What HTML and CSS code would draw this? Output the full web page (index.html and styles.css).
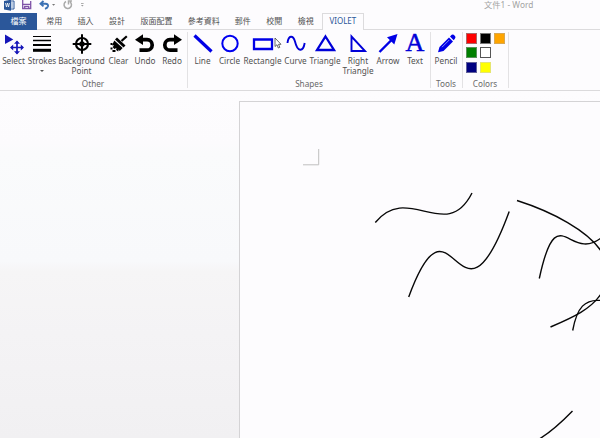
FILE: index.html
```html
<!DOCTYPE html>
<html lang="zh-Hant">
<head>
<meta charset="utf-8">
<title>文件1 - Word</title>
<link rel="stylesheet" href="styles.css">
</head>
<body>
<header class="titlebar">
  <svg class="quick" viewBox="0 0 90 13">
    <path d="M9 1h5v8H9z" fill="#fff" stroke="#2b579a"/><path d="M10 3h3M10 5h3M10 7h3" stroke="#7899c8"/>
    <path d="M4 1l7-1.300v11L4 9.500z" fill="#2b579a"/><path d="M5.500 3l1 4 1-4 1 4 1-4" fill="none" stroke="#fff" stroke-width=".8"/>
    <path d="M22.700 0v8.500h8V1" fill="none" stroke="#8054a8" stroke-width="1.300"/><path d="M22 4.300h9M24.700 8V6.300h4V8" fill="none" stroke="#8054a8" stroke-width="1.300"/>
    <path d="M43.500 1l-3 2.700 3 2.700M41 3.700h4.500q3 .3 2.500 2.500-.5 1.700-3 2.600" fill="none" stroke="#3c72b5" stroke-width="1.900"/>
    <path d="M52 4h3.200L53.600 5.800z" fill="#777"/>
    <path d="M66 1.500a3.700 3.700 0 1 0 4 .3M68.500 4.500V1H72" fill="none" stroke="#aaa" stroke-width="1.500"/>
    <path d="M81 3.500h2.600" stroke="#999" stroke-width=".8"/><path d="M81 5h2.600L82.300 6.600z" fill="#999"/>
  </svg>
  <span class="doc-title">文件1 - Word</span>
</header>
<nav class="tabs">
  <span class="tab file">檔案</span><span class="tab">常用</span><span class="tab">插入</span><span class="tab">設計</span><span class="tab wide4">版面配置</span><span class="tab wide4b">參考資料</span><span class="tab">郵件</span><span class="tab">校閱</span><span class="tab">檢視</span><span class="tab active">VIOLET</span>
</nav>
<main class="ribbon">
  <section class="group other">
    <div class="tools">
      <div class="tool w27"><svg viewBox="1 0 22 22"><path d="M3 1.500v9.500L11.300 6.500z" fill="#1515b8"/><path d="M15 8.500v12M9 14.500h12" stroke="#1515b8" stroke-width="1.700"/><path d="M15 7.500l-3 3.200h6zM15 21.500l-3-3.200h6zM8 14.500l3.200-3v6zM22 14.500l-3.200-3v6z" fill="#1515b8"/></svg><span>Select</span></div>
      <div class="tool w30"><svg viewBox="0 0 22 22"><path d="M2 3.500h18" stroke="#000"/><path d="M2 7.500h18" stroke="#000" stroke-width="1.500"/><path d="M2 12h18" stroke="#000" stroke-width="2"/><path d="M2 17.300h18" stroke="#000" stroke-width="3"/></svg><span>Strokes</span><i class="caret"></i></div>
      <div class="tool w49"><svg viewBox="0 0 22 22"><circle cx="11" cy="11" r="6" fill="none" stroke="#000" stroke-width="2.200"/><path d="M11 1.200v19.600M1.700 11h18.600" stroke="#000" stroke-width="2"/><circle cx="11" cy="11" r="2.700"/></svg><span>Background<br>Point</span></div>
      <div class="tool w25"><svg viewBox="0 0 22 22"><path d="M18.800 3.200L13.500 8" stroke="#000" stroke-width="2.200"/><path d="M9 4.500l8.500 8-2 2L7 6.500z"/><path d="M6.300 7.500l8.400 7.600-3 3-1-1.700-.5 2.200-2.100-1.500.3-2-2 1-1.800-2.200 1.500-1.300-2.100-.3z"/><path d="M2.500 10h2v2h-2zM2.500 14.500h2v2h-2zM4.500 17h3v2h-3z"/></svg><span>Clear</span></div>
      <div class="tool w28"><svg viewBox="0 0 22 22"><path d="M7 6.700h6a5.200 5.200 0 0 1 0 10.400H5.500" fill="none" stroke="#000" stroke-width="3.700"/><path d="M1 6.700l8-5.400v10.800z"/></svg><span>Undo</span></div>
      <div class="tool w26"><svg viewBox="0 0 22 22"><path d="M15 6.700H9a5.200 5.200 0 0 0 0 10.400h7.500" fill="none" stroke="#000" stroke-width="3.700"/><path d="M21 6.700l-8-5.400v10.800z"/></svg><span>Redo</span></div>
    </div>
    <h2>Other</h2>
  </section>
  <section class="group shapes">
    <div class="tools">
      <div class="tool w27"><svg viewBox="0 0 22 22"><path d="M2.500 2.500l17 16" stroke="#0000e6" stroke-width="3.200"/></svg><span>Line</span></div>
      <div class="tool w27"><svg viewBox="0 0 22 22"><circle cx="11" cy="10.500" r="7.700" fill="none" stroke="#0000f0" stroke-width="2"/></svg><span>Circle</span></div>
      <div class="tool w39"><svg viewBox="0 0 22 22"><path d="M2 6.500h18v9.500H2z" fill="none" stroke="#0000e6" stroke-width="2.300"/></svg><span>Rectangle</span></div>
      <div class="tool w27"><svg viewBox="0 0 22 22"><path d="M2.500 10C3.500 2 8 2 10 8.500c2.500 10.500 8 11 9.700 1.500" fill="none" stroke="#0000d8" stroke-width="1.900"/></svg><span>Curve</span></div>
      <div class="tool w32"><svg viewBox="0 0 22 22"><path d="M11.500 3.500L20 17H3z" fill="none" stroke="#0000d8" stroke-width="2.300"/></svg><span>Triangle</span></div>
      <div class="tool w34"><svg viewBox="0 0 22 22"><path d="M4.500 3.500V18H18z" fill="none" stroke="#0000d8" stroke-width="1.900"/></svg><span>Right<br>Triangle</span></div>
      <div class="tool w26"><svg viewBox="0 0 22 22"><path d="M2.500 19L15 6.500" stroke="#0000e6" stroke-width="2.400"/><path d="M20.500 1l-3.200 10.500-7.300-7.300z" fill="#0000e6"/></svg><span>Arrow</span></div>
      <div class="tool w28"><b class="letter">A</b><span>Text</span></div>
    </div>
    <h2>Shapes</h2>
  </section>
  <section class="group pencil">
    <div class="tools">
      <div class="tool w30"><svg viewBox="0 0 22 22"><path d="M4.500 14L14 4.500l4 4L8.500 18 3 19.300z" fill="#0000e6"/><path d="M15 3.500l1.700-1.700q1-.8 2 0l1.300 1.300q1 1.200 0 2.300l-1.300 1.800z" fill="#0000e6"/><path d="M7 14.200l7.200-7.200" stroke="#aab4ff" stroke-width=".8"/></svg><span>Pencil</span></div>
    </div>
    <h2>Tools</h2>
  </section>
  <section class="group colors">
    <div class="swatches"><i class="red"></i><i class="black"></i><i class="orange"></i><i class="green"></i><i class="white"></i><i></i><i class="navy"></i><i class="yellow"></i></div>
    <h2>Colors</h2>
  </section>
</main>
<div class="workspace">
  <div class="page">
    <svg class="drawing" viewBox="240 102 360 336">
      <path d="M303 164.800h15.700V149" fill="none" stroke="#bfbfbf"/>
      <g fill="none" stroke="#080808" stroke-width="1.400">
        <path d="M375.300 222.500C408 182 446 244 472 193"/>
        <path d="M408.700 297C453 176 458 351 509.200 211.500"/>
        <path d="M517 200.500C553 212 588 231 601 251"/>
        <path d="M539.300 278.500C557 196 569 263 601 238"/>
        <path d="M550.500 327C574 317 591 309 601 294"/>
        <path d="M572.700 330.500C577 307 585 299 601 300.500"/>
        <path d="M572.500 411Q554 430 540 438.500"/>
      </g>
    </svg>
  </div>
</div>
<svg class="cursor" viewBox="0 0 8 12"><path d="M1 1v8.500l2-1.800L4.300 11l1.500-.7-1.300-3H7z" fill="#fff" stroke="#444" stroke-width=".8"/></svg>
</body>
</html>
```
FILE: styles.css
```css
* { box-sizing: border-box; }
body {
  margin: 0;
  width: 600px;
  height: 438px;
  overflow: hidden;
  display: flex;
  flex-direction: column;
  background: #fdfcfe;
  color: #505050;
  font-family: "Noto Sans", "Noto Sans CJK TC", sans-serif;
  font-size: 8.200px;
}
svg { display: block; }
.titlebar { display: flex; height: 13px; flex: none; }
.quick { width: 90px; height: 13px; }
.doc-title { margin-left: 394px; font-size: 8.300px; line-height: 10px; color: #a3a3a3; white-space: nowrap; }
.tabs { display: flex; height: 17px; flex: none; border-bottom: 1px solid #dcdbdd; font-size: 8px; }
.tab { width: 31.4px; line-height: 16px; text-align: center; white-space: nowrap; }
.tab.file { width: 37px; margin-right: 1.500px; height: 17px; background: #2b579a; color: #fff; }
.tab.wide4 { width: 47.500px; }
.tab.wide4b { width: 47px; }
.tab.active { width: 42px; height: 17px; border: 1px solid #dcdbdd; border-bottom: 0; background: #fdfcfe; color: #2b579a; line-height: 14px; }
.tab:nth-last-child(2) { margin-right: .5px; }
.ribbon { display: flex; height: 61px; flex: none; border-bottom: 1px solid #dbdadc; }
.group { position: relative; display: flex; flex-direction: column; height: 60px; padding-top: 3px; }
.group::after { content: ""; position: absolute; right: 0; top: 2px; bottom: 2px; width: 1px; background: #e3e2e4; }
.other { width: 188px; }
.shapes { width: 243px; padding-left: 1px; }
.pencil { width: 32px; }
.colors { width: 46px; }
.tools { display: flex; height: 45px; }
.tool { display: flex; flex-direction: column; align-items: center; text-align: center; line-height: 10px; white-space: nowrap; flex: none; }
.tool svg { width: 22px; height: 22px; flex: none; }
.tool span { margin-top: 1px; }
.w25 { width: 25px; } .w26 { width: 26px; } .w27 { width: 27px; } .w28 { width: 28px; }
.w30 { width: 30px; } .w32 { width: 32px; } .w34 { width: 34px; } .w39 { width: 39px; } .w49 { width: 49px; }
.caret { margin-top: 3.500px; border: 2px solid transparent; border-top-color: #555; border-bottom: 0; }
.letter { height: 20px; margin-bottom: 2px; font: 400 26px/20px "Liberation Serif", serif; color: #0000d8; -webkit-text-stroke: .5px #0000d8; }
h2 { margin: 0; padding-right: 2px; font-size: 8.200px; font-weight: 400; line-height: 11px; text-align: center; color: #6a6a6a; }
.swatches { display: grid; grid-template-columns: repeat(3, 11px); grid-auto-rows: 11px; gap: 3.300px 3px; height: 45px; padding-left: 3px; }
.swatches i { border: 1px solid transparent; }
.swatches .red { background: #f00; border-color: #a66; }
.swatches .black { background: #000; border-color: #777; }
.swatches .orange { background: #ffa500; border-color: #d8a750; }
.swatches .green { background: #008000; border-color: #59905a; }
.swatches .white { background: #fff; border-color: #555; }
.swatches .navy { background: #000080; border-color: #60609a; }
.swatches .yellow { background: #ff0; border-color: #e5e570; }
.workspace { display: flex; flex: 1; padding: 10px 0 0 239px; background: linear-gradient(#fdfcfe, #fcfbfd 15%, #fafbfc 18%, #f8f9fb 49%, #f6f5f6 52%, #f4f3f5 70%, #f1f0f2); }
.page { width: 361px; height: 337px; border: 1px solid #d4d3d5; border-width: 1px 0 0 1px; background: #fdfcfe; }
.drawing { width: 360px; height: 336px; }
.cursor { position: absolute; left: 274px; top: 37px; width: 8px; height: 12px; }
```
